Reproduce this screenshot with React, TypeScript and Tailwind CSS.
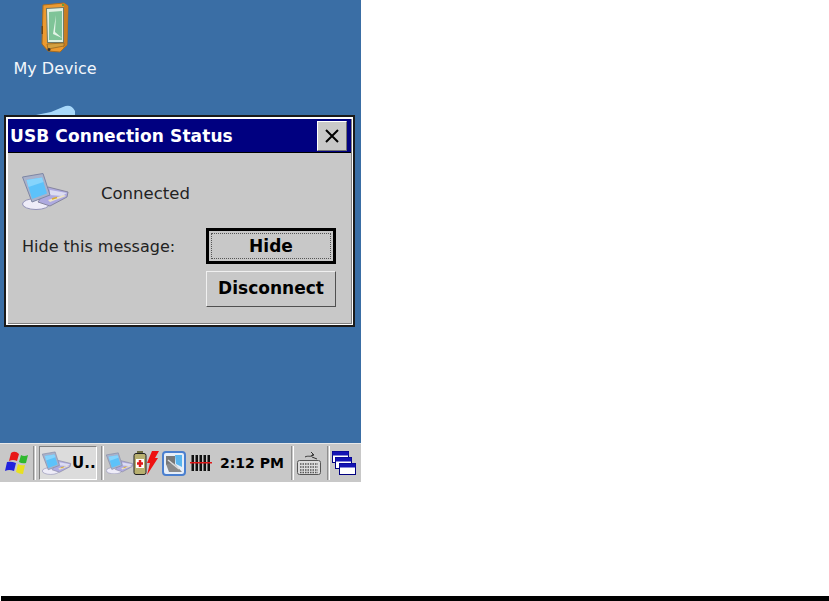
import React from "react";

const PcIcon = ({ width = 48 }: { width?: number }) => (
  <svg width={width} height={(width * 38) / 48} viewBox="0 0 48 38" className="block">
    <ellipse cx="14" cy="32" rx="13.5" ry="5.5" fill="#eeecf8" stroke="#9292b6" strokeWidth="1" />
    <path d="M26 15 L46 20 L45 25 L28 34 L16 30 Z" fill="#aeaae0" stroke="#85859f" strokeWidth="1" />
    <path d="M28 18 L45 21 L40 24 L28 23 Z" fill="#dcdcf2" />
    <path d="M26 28 L42 23 L44 24 L28 30 Z" fill="#ece4c4" />
    <path d="M30 27 L35 25.5" stroke="#d9a92e" strokeWidth="1.5" />
    <path d="M0.5 5 L21 1.5 L28 23 L10 30 Z" fill="#a9b2cb" stroke="#7d86a4" strokeWidth="1" />
    <path d="M4.5 8 L20 5.5 L25 21.5 L10 27 Z" fill="#5cc2fa" />
    <path d="M4.5 8 L20 5.5 L21.5 10 L6.5 15 Z" fill="#86d4fc" />
  </svg>
);

const DeviceIcon = () => (
  <svg width="30" height="52" viewBox="0 0 30 52" className="block">
    <path d="M3 3 L24 1 L28 4 L27 43 L20 50 L8 49 L2 42 Z" fill="#ec9a30" stroke="#a86c20" strokeWidth="1" />
    <path d="M24 1 L28 4 L27 43 L23 46 Z" fill="#c97e22" />
    <path d="M6 6 L24 5 L24 41 L7 41 Z" fill="#707a68" />
    <path d="M7 7 L23 6 L23 40 L8 40 Z" fill="#dff0e2" />
    <path d="M9 10 L22 9 L22 38 L9 38 Z" fill="#7fc498" />
    <path d="M16 13 L13 32 L22 36 L15 30 Z" fill="#e4f4e8" />
    <path d="M7 42 L24 41 L24 44 L8 47 Z" fill="#d4a040" stroke="#8a6020" strokeWidth="0.7" />
    <circle cx="9" cy="47.5" r="1.5" fill="#333" />
    <circle cx="23" cy="3" r="1" fill="#3ca040" />
    <rect x="1.5" y="24" width="1.5" height="8" fill="#6a4416" />
  </svg>
);

const WinFlag = () => (
  <svg width="24" height="28" viewBox="0 0 24 28" className="block">
    <path d="M7 4 Q11 1 15 5 L13 12 Q9 10 5 12 Z" fill="#e81818" />
    <path d="M17 6 Q20 8 24 6 L22 14 Q18 15 15 13 Z" fill="#2eb82e" />
    <path d="M3 13 Q7 12 12 14 L10 22 Q5 20 1 22 Z" fill="#2222dd" />
    <path d="M14 15 Q17 17 21 16 L19 25 Q15 25 12 23 Z" fill="#e8e020" />
  </svg>
);

const Battery = () => (
  <svg width="14" height="26" viewBox="0 0 14 26" className="block">
    <rect x="4" y="1" width="6" height="3" fill="#6a6a40" />
    <rect x="1" y="3.5" width="12" height="21" rx="2" fill="#b8b070" stroke="#222" />
    <rect x="3" y="9" width="8" height="9" fill="#fff" />
    <path d="M7 10 V17 M4 13.5 H10" stroke="#e01818" strokeWidth="2.5" />
  </svg>
);

const Bolt = () => (
  <svg width="12" height="26" viewBox="0 0 12 26" className="block">
    <path d="M5 1 L12 1 L8 8 L11 8 L0 25 L3 13 L0 13 Z" fill="#ee1111" />
  </svg>
);

const Sync = () => (
  <svg width="24" height="25" viewBox="0 0 24 25" className="block">
    <rect x="1" y="1" width="22" height="23" rx="3" fill="#e6eef8" stroke="#4a7fcf" strokeWidth="2" />
    <rect x="4" y="5" width="9" height="9" fill="#777" />
    <path d="M13 4 L20 4 L20 16 L14 13 Z" fill="#59b5ee" />
    <path d="M4 13 L12 12 L20 21 L7 21 Z" fill="#8a8a8a" />
    <path d="M6 9 L17 18" stroke="#ddd" strokeWidth="1.5" />
  </svg>
);

const Barcode = () => (
  <svg width="22" height="16" viewBox="0 0 22 16" className="block">
    {[1.5, 5.5, 9.5, 13.5, 17.5].map((x) => (
      <rect key={x} x={x} y="0" width="2.5" height="16" fill="#111" />
    ))}
    <rect x="0" y="7" width="22" height="1.5" fill="#e01818" />
  </svg>
);

const Keyboard = () => (
  <svg width="24" height="24" viewBox="0 0 24 24" className="block">
    <path d="M8 6 C11 4 15 7 16 3 M14 1 L17 4 L14 5 M15 6 L20 8" fill="none" stroke="#333" strokeWidth="1" />
    <rect x="0.5" y="9.5" width="23" height="14" rx="2" fill="#dcdcdc" stroke="#555" />
    {[13, 16, 19, 21.5].map((y) => (
      <path key={y} d={`M3 ${y} H21`} stroke="#555" strokeWidth="1.5" strokeDasharray="1.5 1" />
    ))}
  </svg>
);

const Windows = () => (
  <svg width="24" height="24" viewBox="0 0 24 24" className="block">
    {[[0, 0], [3, 6], [7, 12]].map(([x, y]) => (
      <g key={x}>
        <rect x={x + 0.5} y={y + 0.5} width="16" height="11" fill="#fff" stroke="#000080" />
        <rect x={x + 0.5} y={y + 0.5} width="16" height="4" fill="#1414b4" />
      </g>
    ))}
  </svg>
);

const Divider = () => (
  <div className="w-[3px] h-[34px] border-l border-l-[#8f8f8f] border-r border-r-white bg-[#c8c8c8]" />
);

export default function App() {
  return (
    <div className="relative w-[829px] h-[601px] bg-white overflow-hidden font-['DejaVu_Sans',sans-serif]">
      <div className="w-[361px] h-[482px] flex flex-col">
        <div className="relative flex-1 bg-[#3a6ea5]">
          <div className="absolute left-[13px] top-[2px] w-[84px] flex flex-col items-center">
            <DeviceIcon />
            <span className="text-[16px] leading-5 mt-[5px] text-[#f2f6fb]">My Device</span>
          </div>
          <svg width="44" height="12" viewBox="0 0 44 12" className="absolute left-[33px] top-[103px]">
            <path d="M3 12 L18 9 L30 4 Q38 0 42 8 L42 12 Z" fill="#a8d8fa" />
          </svg>

          <div className="absolute left-[4px] top-[115px] w-[351px] h-[212px] border-2 border-[#1a1a1a] bg-white pt-[2px] pl-[2px] pr-[1px] pb-[1px]">
            <div className="h-full flex flex-col bg-[#c8c8c8] border-r border-b border-[#808080]">
              <div className="h-[34px] shrink-0 bg-[#000080] flex items-center justify-between pl-[2px] pr-[4px] border-b border-black">
                <span className="text-[17px] leading-none font-bold text-white tracking-[0.1px] mt-[1px]">USB Connection Status</span>
                <div className="w-[30px] h-[30px] bg-[#c8c8c8] border border-t-white border-l-white border-r-[#707070] border-b-[#707070] flex items-center justify-center">
                  <svg width="14" height="14" viewBox="0 0 14 14"><path d="M1 1 L13 13 M13 1 L1 13" stroke="#000" strokeWidth="2" /></svg>
                </div>
              </div>
              <div className="flex-1 flex flex-col pl-[14px] pr-[15px]">
                <div className="flex items-center h-[75px]">
                  <PcIcon />
                  <span className="ml-[31px] mt-[7px] text-[16.5px] text-[#222]">Connected</span>
                </div>
                <div className="flex items-center justify-between">
                  <span className="text-[16px] text-[#222] mt-[1px]">Hide this message:</span>
                  <div className="w-[130px] h-[36px] border-[3px] border-black bg-[#c8c8c8] p-[2px]">
                    <div className="h-full border border-dotted border-[#555] flex items-center justify-center">
                      <span className="text-[17px] font-bold text-black mt-[1px]">Hide</span>
                    </div>
                  </div>
                </div>
                <div className="flex justify-end mt-[7px]">
                  <div className="w-[130px] h-[36px] border border-t-[#f0f0f0] border-l-[#f0f0f0] border-r-[#505050] border-b-[#505050] bg-[#c8c8c8] flex items-center justify-center">
                    <span className="text-[17px] font-bold text-black">Disconnect</span>
                  </div>
                </div>
              </div>
            </div>
          </div>
        </div>

        <div className="h-[39px] bg-[#c8c8c8] border-t border-t-[#e8e8e8] flex items-center pl-[4px]">
          <WinFlag />
          <div className="ml-[5px]"><Divider /></div>
          <div className="ml-[3px] w-[58px] h-[34px] border border-[#808080] border-r-white border-b-white bg-[#dcdcdc] flex items-center pl-[2px]">
            <PcIcon width={30} />
            <span className="text-[15px] font-bold text-black">U..</span>
          </div>
          <div className="ml-[4px]"><Divider /></div>
          <div className="ml-[2px]"><PcIcon width={28} /></div>
          <div className="-ml-[1px]"><Battery /></div>
          <div className="ml-0"><Bolt /></div>
          <div className="ml-[3px]"><Sync /></div>
          <div className="ml-[4px]"><Barcode /></div>
          <span className="ml-[8px] w-[64px] text-[14px] font-bold text-black whitespace-nowrap">2:12 PM</span>
          <div className="ml-[7px]"><Divider /></div>
          <div className="ml-[3px]"><Keyboard /></div>
          <div className="ml-[6px]"><Divider /></div>
          <div className="ml-[2px]"><Windows /></div>
        </div>
      </div>
      <div className="absolute left-[1px] right-0 bottom-0 h-[5px] bg-black" />
    </div>
  );
}
